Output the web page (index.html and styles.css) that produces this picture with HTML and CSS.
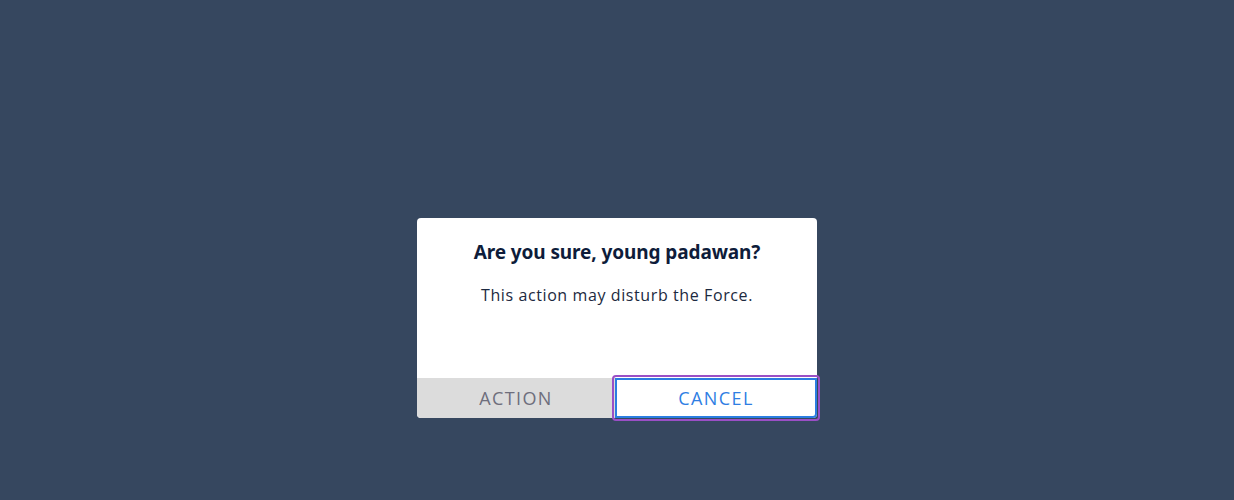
FILE: index.html
```html
<!DOCTYPE html>
<html lang="en">
<head>
<meta charset="utf-8">
<title>Dialog</title>
<link rel="stylesheet" href="styles.css">
</head>
<body>
<div class="stage">
  <div class="dialog" role="dialog" aria-labelledby="dlg-title">
    <div class="dialog-body">
      <h2 class="dialog-title" id="dlg-title">Are you sure, young padawan?</h2>
      <p class="dialog-text">This action may disturb the Force.</p>
    </div>
    <div class="dialog-actions">
      <button class="btn btn-action" type="button">ACTION</button>
      <button class="btn btn-cancel" type="button">CANCEL</button>
    </div>
  </div>
</div>
</body>
</html>
```
FILE: styles.css
```css
html, body {
  margin: 0;
  padding: 0;
  height: 100%;
}
body {
  background: #36475f;
  font-family: "Open Sans", "Noto Sans", sans-serif;
}
.stage {
  height: 500px;
  display: flex;
  justify-content: center;
  padding-top: 218px;
  box-sizing: border-box;
}
.dialog {
  width: 400px;
  height: 200px;
  background: #ffffff;
  border-radius: 4px;
  display: flex;
  flex-direction: column;
}
.dialog-body {
  flex: 1;
  text-align: center;
  padding-top: 21px;
}
.dialog-title {
  margin: 0;
  font-family: "Noto Sans", "Open Sans", sans-serif;
  font-weight: 700;
  font-size: 19px;
  line-height: 26px;
  letter-spacing: -0.1px;
  color: #0e1c3a;
}
.dialog-text {
  margin: 19px 0 0;
  font-size: 16px;
  line-height: 22px;
  color: #1c2940;
  letter-spacing: 0.6px;
}
.dialog-actions {
  display: grid;
  grid-template-columns: 198px 202px;
  height: 40px;
}
.btn {
  margin: 0;
  border: 0;
  font-family: "Open Sans", "Noto Sans", sans-serif;
  font-size: 18px;
  letter-spacing: 1.4px;
  cursor: pointer;
  padding: 0;
}
.btn-action {
  background: #dcdcdc;
  color: #6e6e7c;
  border-bottom-left-radius: 4px;
}
.btn-cancel {
  position: relative;
  background: #ffffff;
  color: #2f7ee3;
  border: 2px solid #2b7de1;
  outline: none;
  border-bottom-right-radius: 4px;
}
.btn-cancel::after {
  content: "";
  position: absolute;
  inset: -5px;
  border: 2px solid #9a4fc6;
  border-radius: 4px;
  pointer-events: none;
}
```
